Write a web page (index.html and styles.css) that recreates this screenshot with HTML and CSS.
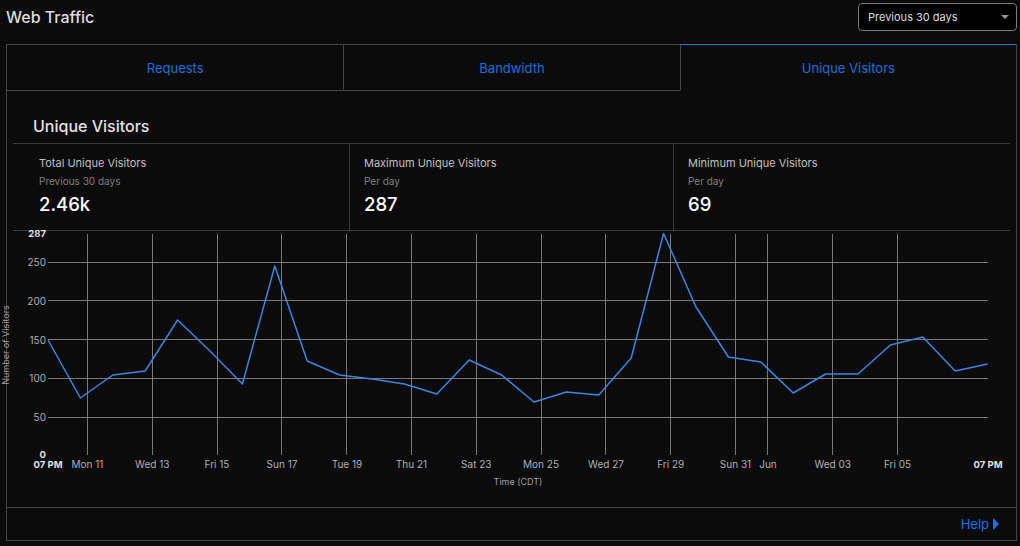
FILE: index.html
```html
<!DOCTYPE html>
<html>
	<head>
		<title>Web Traffic</title>
		<link rel="stylesheet" href="styles.css">
	</head>
	<body>
		<div class="page">
			<div class="top">
				<h1 class="title">Web Traffic</h1>
				<div class="range">
					<span>Previous 30 days</span>
					<span class="caret"></span>
				</div>
			</div>

			<div class="card">
				<div class="tabs">
					<a class="tab">Requests</a>
					<a class="tab">Bandwidth</a>
					<a class="tab active">Unique Visitors</a>
				</div>

				<div class="panel">
					<h2 class="panel-title">Unique Visitors</h2>

					<div class="stats">
						<div class="stat first">
							<div class="stat-label">Total Unique Visitors</div>
							<div class="stat-sub">Previous 30 days</div>
							<div class="stat-value">2.46k</div>
						</div>
						<div class="stat">
							<div class="stat-label">Maximum Unique Visitors</div>
							<div class="stat-sub">Per day</div>
							<div class="stat-value">287</div>
						</div>
						<div class="stat">
							<div class="stat-label">Minimum Unique Visitors</div>
							<div class="stat-sub">Per day</div>
							<div class="stat-value">69</div>
						</div>
					</div>

					<div class="chart">
						<svg width="1009" height="276" viewBox="0 0 1009 276">
							<!-- grid -->
							<path class="grid" d="M41 31.5H981M41 69.5H981M41 108.5H981M41 147.5H981M41 186.5H981"/>
							<path class="grid" d="M80.5 3V224M145.5 3V224M210.5 3V224M274.5 3V224M339.5 3V224M404.5 3V224M469.5 3V224M534.5 3V224M598.5 3V224M663.5 3V224M728.5 3V224M760.5 3V224M825.5 3V224M890.5 3V224"/>

							<!-- y axis -->
							<g class="ylabels">
								<text class="edge" x="39" y="2.5">287</text>
								<text x="39" y="31">250</text>
								<text x="39" y="69.7">200</text>
								<text x="39" y="108.5">150</text>
								<text x="39" y="147">100</text>
								<text x="39" y="186">50</text>
								<text class="edge" x="39" y="223.5">0</text>
							</g>
							<text class="axis-title" transform="translate(-2 114) rotate(-90)">Number of Visitors</text>

							<!-- x axis -->
							<g class="xlabels">
								<text class="edge" x="41" y="233.5">07 PM</text>
								<text x="80.5" y="233">Mon 11</text>
								<text x="145.3" y="233">Wed 13</text>
								<text x="210" y="233">Fri 15</text>
								<text x="275" y="233">Sun 17</text>
								<text x="340" y="233">Tue 19</text>
								<text x="404.5" y="233">Thu 21</text>
								<text x="469.3" y="233">Sat 23</text>
								<text x="534" y="233">Mon 25</text>
								<text x="599" y="233">Wed 27</text>
								<text x="663.7" y="233">Fri 29</text>
								<text x="728.5" y="233">Sun 31</text>
								<text x="761" y="233">Jun</text>
								<text x="825.7" y="233">Wed 03</text>
								<text x="890.5" y="233">Fri 05</text>
								<text class="edge" x="981" y="233">07 PM</text>
							</g>
							<text class="axis-title" x="511" y="250">Time (CDT)</text>

							<!-- visitors per day -->
							<polyline class="line" points="41,109 73.4,167 105.8,144 138.2,140 170.6,89 203,120 235.4,153 267.8,35 300.2,130 332.6,144 365,148 397.4,153 429.8,163 462.2,129 494.6,144 527,171 559.4,161 591.8,164 624.2,127 656.6,2.5 689,76 721.4,126 753.8,131 786.2,162 818.6,143 851,143 883.4,114 915.8,106 948.2,140 980.6,133"/>
						</svg>
					</div>
				</div>

				<div class="card-foot">
					<a class="help">Help
						<svg width="6" height="12" viewBox="0 0 6 12"><polygon points="0,0 6,6 0,12"/></svg>
					</a>
				</div>
			</div>
		</div>
	</body>
</html>
```

FILE: styles.css
```css
* {
	box-sizing: border-box;
}

body {
	margin: 0;
	background-color: #0b0b0b;
	color: #ddd;
	font-family: Inter, "Noto Sans", sans-serif;
}

.page {
	padding: 3px 3px 0 6px;
}

.top {
	display: flex;
	justify-content: space-between;
	align-items: center;
	height: 28px;
	margin-bottom: 13px;
}

.title {
	margin: 0;
	font-size: 16px;
	font-weight: 500;
	color: #ddd;
}

.range {
	width: 159px;
	height: 28px;
	display: flex;
	justify-content: space-between;
	align-items: center;
	padding: 0 7px 0 9px;
	background-color: #000;
	border: 1px solid #7a7a7a;
	border-radius: 4px;
	font-size: 11px;
	color: #ddd;
}

.caret {
	border-left: 4px solid transparent;
	border-right: 4px solid transparent;
	border-top: 4px solid #999;
}

.card {
	border: 1px solid #444;
	border-top: none;
}

.tabs {
	display: grid;
	grid-template-columns: 1fr 1fr 1fr;
}

.tab {
	height: 47px;
	display: flex;
	justify-content: center;
	align-items: center;
	border-top: 1px solid #444;
	border-bottom: 1px solid #444;
	color: #1f6fd6;
	font-size: 13px;
	cursor: pointer;
}

.tab + .tab {
	border-left: 1px solid #444;
}

.tab.active {
	border-top-color: #2f74d0;
	border-bottom-color: transparent;
}

.panel {
	padding: 0 6px;
}

.panel-title {
	margin: 25px 0 7px 20px;
	font-size: 16px;
	line-height: 20px;
	font-weight: 500;
	color: #e2e2e2;
}

.stats {
	display: grid;
	grid-template-columns: 336px 324px 1fr;
	border-top: 1px solid #3a3a3a;
	border-bottom: 1px solid #3a3a3a;
}

.stat {
	padding: 12px 14px 14px;
}

.stat.first {
	padding-left: 26px;
}

.stat + .stat {
	border-left: 1px solid #3a3a3a;
}

.stat-label {
	font-size: 11px;
	line-height: 14px;
	color: #c0c0c0;
}

.stat-sub {
	margin-top: 5px;
	font-size: 10px;
	line-height: 13px;
	color: #808080;
}

.stat-value {
	margin-top: 4px;
	font-size: 18.5px;
	line-height: 24px;
	font-weight: 500;
	color: #fff;
}

.chart {
	margin: 0 -6px;
	height: 276px;
}

.chart svg {
	display: block;
	overflow: visible;
}

.grid {
	stroke: #777;
	stroke-width: 1;
	fill: none;
	shape-rendering: crispEdges;
}

.line {
	fill: none;
	stroke: #3b86e0;
	stroke-width: 1.5;
	stroke-linejoin: round;
}

.ylabels text {
	font-size: 10px;
	fill: #b0b0b0;
	text-anchor: end;
	dominant-baseline: central;
}

.xlabels text {
	font-size: 10px;
	fill: #b0b0b0;
	text-anchor: middle;
	dominant-baseline: central;
}

.chart text.edge {
	font-size: 9.5px;
	font-weight: 700;
	fill: #e0e0e0;
}

.axis-title {
	font-size: 9px;
	fill: #a0a0a0;
	text-anchor: middle;
	dominant-baseline: central;
}

.card-foot {
	height: 33px;
	display: flex;
	justify-content: flex-end;
	align-items: center;
	padding-right: 17px;
	border-top: 1px solid #444;
}

.help {
	display: flex;
	align-items: center;
	gap: 4px;
	color: #1a73e8;
	font-size: 13px;
	cursor: pointer;
}

.help svg {
	fill: #1a73e8;
}
```
